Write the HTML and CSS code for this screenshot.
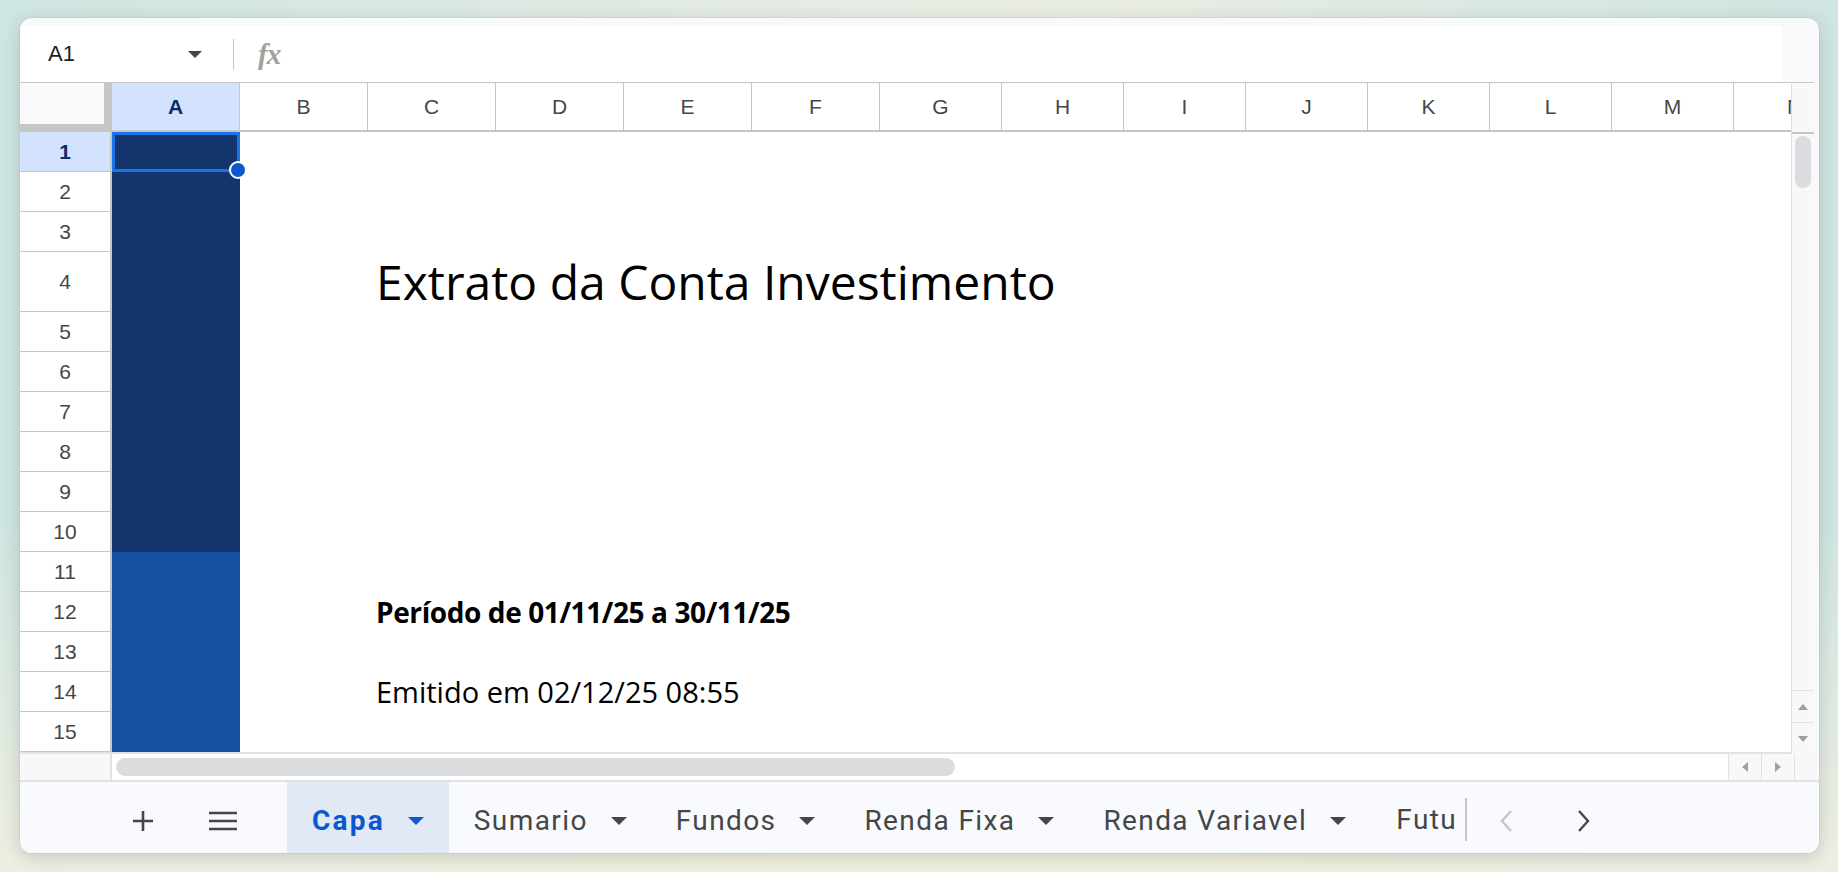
FILE: index.html
```html
<!DOCTYPE html>
<html lang="pt">
<head>
    <meta charset="UTF-8">
    <title>Extrato da Conta Investimento</title>
    <link rel="stylesheet" href="styles.css">
</head>
<body>
    <div class="window">
        <div class="top-strip"></div>
        <div class="formula-bar">
            <div class="name-box">
                <span>A1</span>
                <svg class="caret" width="14" height="7" viewBox="0 0 14 7"><path d="M0 0h14L7 7z" fill="#444746"/></svg>
            </div>
            <div class="fx-sep"></div>
            <div class="fx">fx</div>
            <div class="formula-input"></div>
        </div>
        <div class="sheet">
            <div class="grid-wrap">
                <div class="grid">
                    <div class="corner"></div>
                    <div class="ch active">A</div>
                    <div class="ch">B</div>
                    <div class="ch">C</div>
                    <div class="ch">D</div>
                    <div class="ch">E</div>
                    <div class="ch">F</div>
                    <div class="ch">G</div>
                    <div class="ch">H</div>
                    <div class="ch">I</div>
                    <div class="ch">J</div>
                    <div class="ch">K</div>
                    <div class="ch">L</div>
                    <div class="ch">M</div>
                    <div class="ch">N</div>

                    <div class="rh active">1</div>
                    <div class="rh">2</div>
                    <div class="rh">3</div>
                    <div class="rh">4</div>
                    <div class="rh">5</div>
                    <div class="rh">6</div>
                    <div class="rh">7</div>
                    <div class="rh">8</div>
                    <div class="rh">9</div>
                    <div class="rh">10</div>
                    <div class="rh">11</div>
                    <div class="rh">12</div>
                    <div class="rh">13</div>
                    <div class="rh">14</div>
                    <div class="rh">15</div>

                    <div class="fill-dark"></div>
                    <div class="fill-blue"></div>
                    <div class="selection"></div>

                    <div class="cell title">Extrato da Conta Investimento</div>
                    <div class="cell period">Período de 01/11/25 a 30/11/25</div>
                    <div class="cell issued">Emitido em 02/12/25 08:55</div>
                </div>
            </div>
            <div class="vscroll">
                <div class="vs-head"></div>
                <div class="vs-track"><div class="vs-thumb"></div></div>
                <div class="vs-btn"><svg width="10" height="6" viewBox="0 0 10 6"><path d="M0 6h10L5 0z" fill="#9aa0a6"/></svg></div>
                <div class="vs-btn"><svg width="10" height="6" viewBox="0 0 10 6"><path d="M0 0h10L5 6z" fill="#9aa0a6"/></svg></div>
            </div>
        </div>
        <div class="hscroll">
            <div class="hs-corner"></div>
            <div class="hs-track"><div class="hs-thumb"></div></div>
            <div class="hs-btn"><svg width="6" height="10" viewBox="0 0 6 10"><path d="M6 0v10L0 5z" fill="#9aa0a6"/></svg></div>
            <div class="hs-btn"><svg width="6" height="10" viewBox="0 0 6 10"><path d="M0 0v10L6 5z" fill="#9aa0a6"/></svg></div>
            <div class="hs-end"></div>
        </div>
        <div class="tabbar">
            <div class="tool">
                <svg width="24" height="24" viewBox="0 0 24 24"><path d="M12 2v20M2 12h20" stroke="#444746" stroke-width="2.6"/></svg>
            </div>
            <div class="tool">
                <svg width="28" height="22" viewBox="0 0 28 22"><path d="M0 3h28M0 11h28M0 19h28" stroke="#444746" stroke-width="2.6"/></svg>
            </div>
            <div class="tab current">
                <span>Capa</span>
                <svg width="16" height="8" viewBox="0 0 16 8"><path d="M0 0h16L8 8z" fill="#0b57d0"/></svg>
            </div>
            <div class="tab">
                <span>Sumario</span>
                <svg width="16" height="8" viewBox="0 0 16 8"><path d="M0 0h16L8 8z" fill="#444746"/></svg>
            </div>
            <div class="tab">
                <span>Fundos</span>
                <svg width="16" height="8" viewBox="0 0 16 8"><path d="M0 0h16L8 8z" fill="#444746"/></svg>
            </div>
            <div class="tab">
                <span>Renda Fixa</span>
                <svg width="16" height="8" viewBox="0 0 16 8"><path d="M0 0h16L8 8z" fill="#444746"/></svg>
            </div>
            <div class="tab">
                <span>Renda Variavel</span>
                <svg width="16" height="8" viewBox="0 0 16 8"><path d="M0 0h16L8 8z" fill="#444746"/></svg>
            </div>
            <div class="tab cut">
                <span>Futu</span>
            </div>
            <div class="nav">
                <svg width="14" height="24" viewBox="0 0 14 24"><path d="M12 2L3 12l9 10" stroke="#c4c7c5" stroke-width="2.4" fill="none"/></svg>
            </div>
            <div class="nav">
                <svg width="14" height="24" viewBox="0 0 14 24"><path d="M2 2l9 10-9 10" stroke="#444746" stroke-width="2.4" fill="none"/></svg>
            </div>
        </div>
    </div>
</body>
</html>
```

FILE: styles.css
```css
body {
    margin: 0;
    height: 872px;
    overflow: hidden;
    background:
        linear-gradient(to bottom, rgba(244, 241, 224, 0) 60%, rgba(244, 241, 224, 0.8) 100%),
        linear-gradient(to right, #cfe5e1 0%, #e6ece3 45%, #e9ede3 60%, #cfe5e1 100%);
    font-family: "Liberation Sans", Arial, sans-serif;
}
.window {
    margin: 18px 0 0 20px;
    width: 1799px;
    height: 835px;
    border-radius: 12px;
    overflow: hidden;
    background: #f8f9fa;
    box-shadow: 0 4px 18px rgba(0, 0, 0, 0.16), 0 0 0 1px rgba(0, 0, 0, 0.04);
    display: flex;
    flex-direction: column;
}
.top-strip {
    height: 8px;
    flex-shrink: 0;
}
.formula-bar {
    height: 56px;
    flex-shrink: 0;
    width: 1762px;
    background: #fff;
    display: flex;
    align-items: center;
}
.name-box {
    width: 186px;
    padding-left: 28px;
    padding-right: 4px;
    display: flex;
    align-items: center;
    justify-content: space-between;
    font-size: 22px;
    color: #1f1f1f;
    box-sizing: border-box;
}
.fx-sep {
    width: 1px;
    height: 31px;
    background: #c4c7c5;
    margin-left: 27px;
}
.fx {
    margin-left: 24px;
    font-family: "Liberation Serif", serif;
    font-style: italic;
    font-weight: bold;
    font-size: 29px;
    color: #a0a0a0;
    letter-spacing: -1px;
}
.formula-input {
    flex: 1;
}

.sheet {
    height: 672px;
    flex-shrink: 0;
    display: flex;
    padding-right: 5px;
}
.grid-wrap {
    width: 1771px;
    overflow: hidden;
    background: #fff;
    border-top: 1px solid #c4c7c5;
    border-bottom: 2px solid #e1e3e1;
    box-sizing: border-box;
}
.grid {
    display: grid;
    grid-template-columns: 92px repeat(6, 128px) repeat(8, 122px);
    grid-template-rows: 49px repeat(3, 40px) 60px repeat(11, 40px);
    width: max-content;
    color: #444746;
    font-size: 21px;
}
.corner {
    background: #f8f9fa;
    border-right: 8px solid #c4c7c5;
    border-bottom: 8px solid #c4c7c5;
}
.ch {
    border-right: 1px solid #c4c7c5;
    border-bottom: 2px solid #c4c7c5;
    display: flex;
    align-items: center;
    justify-content: center;
    background: #fff;
}
.rh {
    grid-column: 1;
    border-right: 2px solid #c4c7c5;
    border-bottom: 1px solid #c4c7c5;
    display: flex;
    align-items: center;
    justify-content: center;
    background: #fff;
}
.ch.active, .rh.active {
    background: #d3e3fd;
    color: #0b2e66;
    font-weight: bold;
}
.fill-dark {
    grid-column: 2;
    grid-row: 2 / span 10;
    background: #14356d;
}
.fill-blue {
    grid-column: 2;
    grid-row: 12 / span 5;
    background: #164f9d;
}
.selection {
    grid-column: 2;
    grid-row: 2;
    border: 3px solid #1a73e8;
    position: relative;
}
.selection::after {
    content: "";
    position: absolute;
    right: -10px;
    bottom: -10px;
    width: 14px;
    height: 14px;
    border-radius: 50%;
    background: #0b57d0;
    border: 2px solid #fff;
}
.cell {
    font-family: "Open Sans", sans-serif;
    color: #000;
    white-space: nowrap;
    align-self: end;
    padding-left: 8px;
}
.title {
    grid-column: 4 / span 9;
    grid-row: 5;
    font-size: 48px;
    line-height: 60px;
}
.period {
    grid-column: 4 / span 6;
    grid-row: 13;
    font-size: 28px;
    font-weight: bold;
    letter-spacing: -0.4px;
    line-height: 40px;
}
.issued {
    grid-column: 4 / span 6;
    grid-row: 15;
    font-size: 29px;
    line-height: 40px;
}

.vscroll {
    width: 23px;
    display: flex;
    flex-direction: column;
    background: #f8f8f8;
    border-left: 1px solid #dadce0;
    border-top: 1px solid #c4c7c5;
    box-sizing: border-box;
}
.vs-head {
    height: 49px;
    border-bottom: 2px solid #c4c7c5;
}
.vs-track {
    flex: 1;
    padding: 2px 3px;
}
.vs-thumb {
    height: 52px;
    border-radius: 8px;
    background: #dadce0;
}
.vs-btn {
    height: 31px;
    border-top: 1px solid #e1e3e1;
    display: flex;
    align-items: center;
    justify-content: center;
}

.hscroll {
    height: 26px;
    flex-shrink: 0;
    display: flex;
    border-bottom: 2px solid #e1e3e1;
}
.hs-corner {
    width: 90px;
    background: #f8f8f8;
    border-right: 2px solid #e1e3e1;
}
.hs-track {
    width: 1616px;
    background: #fff;
    padding: 4px 0 0 4px;
    box-sizing: border-box;
}
.hs-thumb {
    width: 839px;
    height: 18px;
    border-radius: 9px;
    background: #dadce0;
}
.hs-btn {
    width: 32px;
    background: #f8f8f8;
    border-left: 1px solid #e1e3e1;
    display: flex;
    align-items: center;
    justify-content: center;
}
.hs-end {
    width: 23px;
    background: #f8f8f8;
    border-left: 1px solid #e1e3e1;
}

.tabbar {
    flex: 1;
    background: #f8fafd;
    display: flex;
    align-items: stretch;
    font-family: Roboto, "Liberation Sans", sans-serif;
    font-size: 28px;
    letter-spacing: 1.4px;
    color: #444746;
}
.tool {
    display: flex;
    align-items: center;
    justify-content: center;
    width: 80px;
    padding-top: 6px;
}
.tool:first-child {
    margin-left: 83px;
}
.tab {
    display: flex;
    align-items: center;
    gap: 23px;
    padding: 6px 24px 0 25px;
}
.tab.current {
    margin-left: 24px;
    padding-right: 25px;
    background: #e1e9f7;
    color: #0b57d0;
    font-weight: bold;
    letter-spacing: 2.2px;
}
.tab.cut {
    border-right: 2px solid #c4c7c5;
    margin: 16px 0 12px;
    padding: 0 8px 0 26px;
}
.nav {
    display: flex;
    align-items: center;
    justify-content: center;
    width: 78px;
    padding-top: 6px;
}
.nav:first-of-type {
    margin-left: 12px;
}
```
